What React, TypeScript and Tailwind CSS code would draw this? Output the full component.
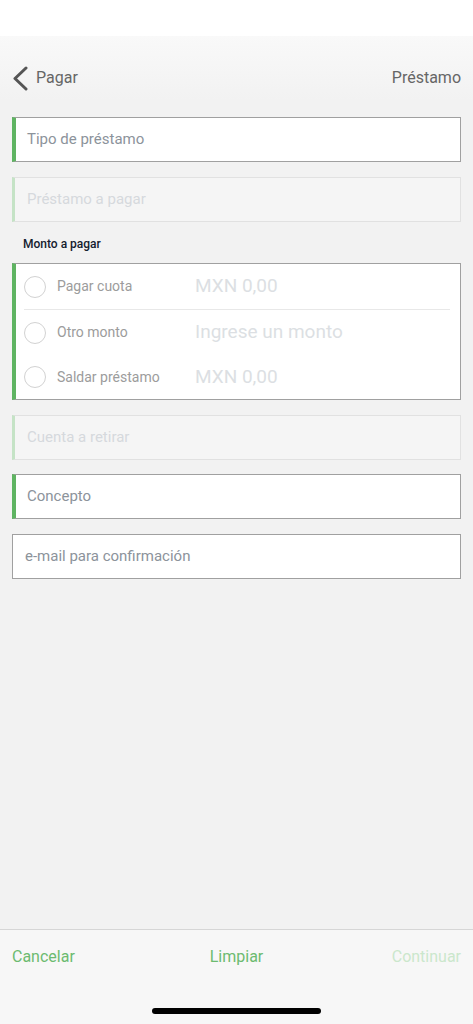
import React from 'react';

const font = { fontFamily: 'Roboto, "Open Sans", sans-serif' };

interface FieldProps {
  label: string;
  disabled?: boolean;
  accent?: boolean;
}

// Single text field with a green left accent
const Field: React.FC<FieldProps> = ({ label, disabled, accent = true }) => {
  if (disabled) {
    return (
      <div className="h-[45px] mx-3 flex items-center bg-[#f5f5f5] border border-[#e1e1e1] border-l-[3px] border-l-[#c5e3c6] pl-[12px]">
        <span className="text-[15px] text-[#d6d9dd]">{label}</span>
      </div>
    );
  }
  return (
    <div
      className={`h-[45px] mx-3 flex items-center bg-white border border-[#a0a0a0] ${
        accent ? 'border-l-[4px] border-l-[#5fb462] pl-[11px]' : 'pl-[12px]'
      }`}
    >
      <span className="text-[15px] text-[#8c939b]">{label}</span>
    </div>
  );
};

const options = [
  { label: 'Pagar cuota', value: 'MXN 0,00' },
  { label: 'Otro monto', value: 'Ingrese un monto' },
  { label: 'Saldar préstamo', value: 'MXN 0,00' },
];

const rowClass = ['h-[46px] border-b border-[#e8e8e8]', 'h-[45px]', 'h-[44px]'];

export default function App() {
  return (
    <div className="min-h-[1024px] h-screen flex flex-col bg-[#f2f2f2]" style={font}>
      {/* status bar */}
      <div className="h-[36px] bg-white" />

      {/* nav header */}
      <div className="h-[64px] pt-[20px] flex items-center justify-between px-3 bg-gradient-to-b from-[#f9f9f9] to-[#f2f2f2]">
        <div className="flex items-center gap-[7px]">
          <svg width="17" height="25" viewBox="0 0 17 25" fill="none">
            <path d="M14 2 L3 12.5 L14 23" stroke="#555" strokeWidth="3" strokeLinecap="round" strokeLinejoin="round" />
          </svg>
          <span className="text-[16px] text-[#666]">Pagar</span>
        </div>
        <span className="text-[16px] text-[#666]">Préstamo</span>
      </div>

      {/* form */}
      <div className="flex-1 flex flex-col pt-[17px]">
        <Field label="Tipo de préstamo" />
        <div className="h-[15px]" />
        <Field label="Préstamo a pagar" disabled />

        <div className="pl-[23px] pt-[13px] pb-[10px] text-[12px] font-medium text-[#14202e]">Monto a pagar</div>

        <div className="mx-3 bg-white border border-[#a0a0a0] border-l-[4px] border-l-[#5fb462] pl-[8px] pr-[10px]">
          {options.map((o, i) => (
            <div key={o.label} className={`flex items-center ${rowClass[i]}`}>
              <div className="w-[22px] h-[22px] rounded-full border-[1.5px] border-[#d2d2d2] shrink-0" />
              <span className="ml-[11px] w-[138px] text-[14px] text-[#9c9c9c]">{o.label}</span>
              <span className="text-[19px] text-[#dcdfe3]">{o.value}</span>
            </div>
          ))}
        </div>

        <div className="h-[15px]" />
        <Field label="Cuenta a retirar" disabled />
        <div className="h-[14px]" />
        <Field label="Concepto" />
        <div className="h-[15px]" />
        <Field label="e-mail para confirmación" accent={false} />
      </div>

      {/* footer actions */}
      <div className="h-[95px] bg-[#f7f7f7] border-t border-[#d6d6d6] flex flex-col">
        <div className="h-[54px] grid grid-cols-3 items-center px-3">
          <span className="text-[16px] text-[#6cbb70]">Cancelar</span>
          <span className="text-[16px] text-[#6cbb70] text-center">Limpiar</span>
          <span className="text-[16px] text-[#cbe7cc] text-right">Continuar</span>
        </div>
        <div className="flex-1 flex justify-center pt-[24px]">
          <div className="w-[169px] h-[6px] rounded-full bg-black" />
        </div>
      </div>
    </div>
  );
}
